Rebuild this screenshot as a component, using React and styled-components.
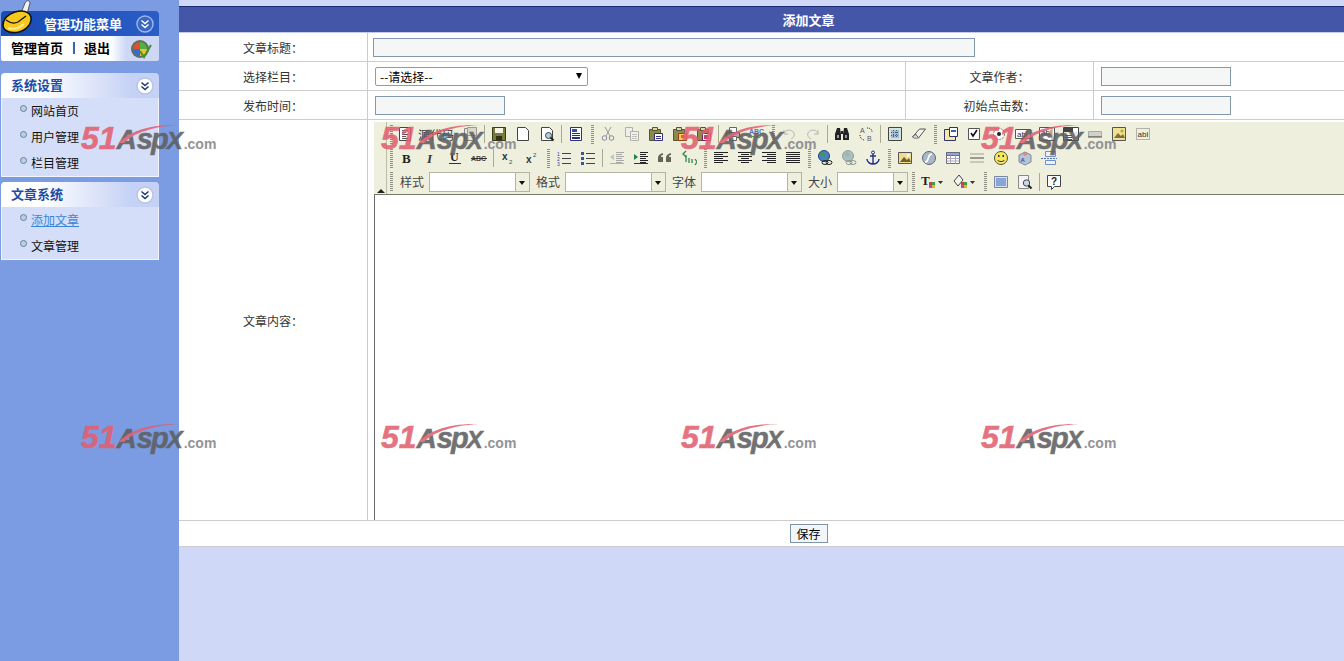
import React from 'react';
import styled, { createGlobalStyle } from 'styled-components';

const GlobalStyle = createGlobalStyle`
  html, body {
    margin: 0;
    padding: 0;
    height: 100%;
    overflow: hidden;
  }
  body {
    font-family: "Noto Sans CJK SC", "Liberation Sans", sans-serif;
    font-size: 12px;
    color: #000;
  }
`;

const Page = styled.div`
  position: relative;
  display: flex;
  width: 1344px;
  height: 661px;
  overflow: hidden;
  background: #cfd8f6;
`;

/* ---------- sidebar ---------- */

const Sidebar = styled.aside`
  position: relative;
  flex: 0 0 179px;
  box-sizing: border-box;
  padding: 11px 20px 0 1px;
  background: #7b9be3;
`;

const Logo = styled.svg`
  position: absolute;
  left: 1px;
  top: 0;
`;

const MenuTitle = styled.div`
  display: flex;
  align-items: center;
  justify-content: space-between;
  height: 25px;
  padding: 0 4px 0 43px;
  border-radius: 4px 4px 0 0;
  background: linear-gradient(to right, #174ab2, #2a5ec6);
  color: #fff;
  font-size: 13px;
  font-weight: 700;
  line-height: 25px;
`;

const HomeRow = styled.div`
  display: flex;
  align-items: center;
  box-sizing: border-box;
  height: 25px;
  padding: 0 0 2px 10px;
  background: linear-gradient(to right, #fff 0, #fff 110px, #cdd8f6 125px);
  font-size: 13px;
  font-weight: 700;
  border-radius: 0 0 2px 2px;
`;

const HomeDivider = styled.span`
  width: 2px;
  height: 12px;
  margin: 0 9px 0 10px;
  background: #3a66b0;
`;

const HomeIcon = styled.svg`
  margin: 3px 7px 0 auto;
`;

const Section = styled.section`
  margin-top: ${(p) => p.$gap}px;
`;

const SectionHead = styled.div`
  display: flex;
  align-items: center;
  justify-content: space-between;
  height: 25px;
  padding: 0 4px 0 10px;
  border-radius: 4px 4px 0 0;
  background: linear-gradient(to right, #fff 40px, #c6d2f5 130px);
  color: #1d4da6;
  font-size: 13px;
  font-weight: 700;
`;

const HeadText = styled.span`
  margin-top: -3px;
`;

const SectionBody = styled.div`
  border: 1px solid #f2f5fd;
  border-top: 0;
  background: #d5def8;
`;

const MenuItem = styled.div`
  display: flex;
  align-items: center;
  height: 26px;
  padding: 0 0 2px 18px;
  box-sizing: border-box;
  color: ${(p) => (p.$active ? '#3a86d8' : '#111')};
  text-decoration: ${(p) => (p.$active ? 'underline' : 'none')};
  &::before {
    content: '';
    width: 5px;
    height: 5px;
    margin: -3px 4px 0 0;
    border: 1px solid #6f7f94;
    border-radius: 50%;
    background: #b9cfe6;
  }
`;

/* ---------- main form ---------- */

const Main = styled.main`
  flex: 0 0 1259px;
  padding-top: 6px;
`;

const TitleBar = styled.div`
  height: 25px;
  border-top: 1px solid #1a2b78;
  border-bottom: 1px solid #c4cbe4;
  background: #4456a8;
  color: #fff;
  font-size: 13px;
  font-weight: 700;
  line-height: 26px;
  text-align: center;
`;

const FormRow = styled.div`
  display: grid;
  grid-template-columns: 189px 538px 188px 344px;
  height: ${(p) => p.$height || 28}px;
  border-bottom: 1px solid #cccccc;
  background: #fff;
`;

const LabelCell = styled.div`
  display: flex;
  align-items: center;
  justify-content: center;
  border-right: 1px solid #cccccc;
  color: #333;
`;

const FieldCell = styled.div`
  display: flex;
  align-items: center;
  min-width: 0;
  overflow: hidden;
  padding-left: ${(p) => p.$pad ?? 7}px;
  grid-column: span ${(p) => p.$span || 1};
  border-right: ${(p) => (p.$line ? '1px solid #cccccc' : '0')};
`;

const TextInput = styled.input`
  box-sizing: border-box;
  width: ${(p) => p.$width}px;
  height: 19px;
  padding: 0 3px;
  border: 1px solid #8399ab;
  background: #f5f7f7;
  outline: none;
  font: inherit;
`;

const SelectWrap = styled.div`
  position: relative;
  width: 213px;
  height: 19px;
  &::after {
    content: '';
    position: absolute;
    right: 6px;
    top: 6px;
    border-left: 3px solid transparent;
    border-right: 3px solid transparent;
    border-top: 6px solid #000;
  }
`;

const NativeSelect = styled.select`
  appearance: none;
  box-sizing: border-box;
  width: 100%;
  height: 100%;
  padding: 0 0 0 4px;
  border: 1px solid #999;
  border-radius: 2px;
  background: #fff;
  color: #000;
  font: inherit;
`;

const SaveRow = styled.div`
  display: flex;
  align-items: center;
  justify-content: center;
  height: 25px;
  border-bottom: 1px solid #cccccc;
  background: #fff;
`;

const SaveButton = styled.button`
  box-sizing: border-box;
  width: 38px;
  height: 19px;
  padding: 0;
  border: 1px solid #7f95ab;
  background: #f3f5f7;
  color: #000;
  font: inherit;
  line-height: 16px;
`;

/* ---------- editor ---------- */

const EditorCell = styled.div`
  grid-column: span 3;
  min-width: 0;
  padding: 2px 0 0 6px;
  overflow: hidden;
`;

const Toolbar = styled.div`
  display: flex;
  height: 72px;
  border-bottom: 1px solid #77776a;
  background: #efefde;
`;

const Collapser = styled.div`
  flex: 0 0 12px;
  position: relative;
  border-right: 1px solid #bdbda8;
  &::after {
    content: '';
    position: absolute;
    left: 3px;
    bottom: 1px;
    border-left: 4px solid transparent;
    border-right: 4px solid transparent;
    border-bottom: 4px solid #222;
  }
`;

const ToolRows = styled.div`
  flex: 1;
`;

const ToolRow = styled.div`
  display: flex;
  align-items: center;
  height: ${(p) => p.$height}px;
`;

const Gripper = styled.span`
  flex: 0 0 8px;
  height: 19px;
  background: repeating-linear-gradient(to bottom, #8f8f84 0 1px, transparent 1px 2px) center / 3px 100% no-repeat;
`;

const Separator = styled.span`
  flex: 0 0 5px;
  height: 18px;
  background: linear-gradient(#a9a996, #a9a996) center / 1px 100% no-repeat;
`;

const ToolButton = styled.span`
  flex: 0 0 ${(p) => p.$width || 24}px;
  display: flex;
  align-items: center;
  justify-content: center;
  height: 18px;
`;

const SourceButton = styled.span`
  flex: 0 0 63px;
  display: flex;
  align-items: center;
  gap: 5px;
  padding-left: 2px;
  box-sizing: border-box;
  color: #333;
`;

const ComboLabel = styled.span`
  flex: 0 0 auto;
  padding: 0 5px;
  color: #444;
`;

const Combo = styled.span`
  flex: 0 0 ${(p) => p.$width}px;
  display: flex;
  box-sizing: border-box;
  height: 20px;
  margin-right: 1px;
  border: 1px solid #b4b4a4;
  background: #fff;
`;

const ComboArrow = styled.span`
  position: relative;
  margin-left: auto;
  width: 13px;
  border-left: 1px solid #b4b4a4;
  background: #efefde;
  &::after {
    content: '';
    position: absolute;
    left: 3px;
    top: 8px;
    border-left: 3px solid transparent;
    border-right: 3px solid transparent;
    border-top: 4px solid #111;
  }
`;

const EditArea = styled.div`
  height: 325px;
  border-left: 1px solid #6b6b6b;
  background: #fff;
`;

/* ---------- watermark ---------- */

const WatermarkLayer = styled.div`
  position: absolute;
  left: 81px;
  top: 124px;
  display: grid;
  grid-template-columns: repeat(4, 300px);
  grid-auto-rows: 299px;
  pointer-events: none;
`;

const Mark = styled.div`
  position: relative;
  display: flex;
  align-items: baseline;
  height: 28px;
  line-height: 28px;
  font-family: "Liberation Sans", Arial, sans-serif;
  font-weight: 700;
  white-space: nowrap;
  opacity: 0.88;
`;

const MarkNum = styled.span`
  color: #e25f70;
  font-size: 32px;
  font-style: italic;
  -webkit-text-stroke: 0.6px #e25f70;
`;

const MarkBrand = styled.span`
  color: #5e5e60;
  font-size: ${(p) => p.$size}px;
  font-style: italic;
  letter-spacing: ${(p) => p.$track || 0}px;
  -webkit-text-stroke: 0.5px #5e5e60;
`;

const MarkTail = styled.span`
  margin-left: 1px;
  color: #85868a;
  font-size: 14px;
`;

const Swoosh = styled.svg`
  position: absolute;
  left: 38px;
  top: 0;
`;

const Watermark = () => (
  <Mark>
    <MarkNum>51</MarkNum>
    <MarkBrand $size={28}>A</MarkBrand>
    <MarkBrand $size={29} $track={-2}>sp</MarkBrand>
    <MarkBrand $size={24}>X</MarkBrand>
    <MarkTail>.com</MarkTail>
    <Swoosh width="62" height="20" viewBox="0 0 62 20">
      <path d="M0 19C8 9 28 0 60 1 36 2 14 9 5 19Z" fill="#e25f70" />
    </Swoosh>
  </Mark>
);

/* ---------- toolbar icons ---------- */

const sans = 'Liberation Sans, sans-serif';
const serif = 'Liberation Serif, serif';

const lines = (ys, x1, x2, color = '#333') =>
  ys.map((y, i) => {
    const pair = Array.isArray(x2) ? x2[i % x2.length] : x2;
    return <path key={y} d={`M${x1} ${y + 0.5}H${pair}`} stroke={color} />;
  });

const page = <path d="M2.5 1.5h8l3 3v10h-11z" fill="#fff" stroke="#444" />;
const clipboard = (
  <>
    <path d="M1.5 3.5h11v11h-11z" fill="#8a8a50" stroke="#555530" />
    <path d="M4.5 1.5h5v3h-5z" fill="#dcd8b0" stroke="#555530" />
  </>
);
const colorSquares = (
  <>
    <rect x="8" y="8" width="3" height="3" fill="#d04040" />
    <rect x="11" y="8" width="3" height="3" fill="#40a040" />
    <rect x="8" y="11" width="3" height="3" fill="#c040c0" />
    <rect x="11" y="11" width="3" height="3" fill="#e0b030" />
  </>
);
const grid = (
  <>
    <path d="M1.5 2.5h13v11h-13z" fill="#fff" stroke="#6a6a7a" />
    <path d="M1.5 2.5h13v3h-13z" fill="#8fa8d8" stroke="#6a6a7a" />
    <path d="M1.5 8.5h13M1.5 11h13M5.5 5.5v8M10.5 5.5v8" stroke="#a8a8b8" fill="none" />
  </>
);

const glyphs = {
  docProps: (
    <>
      <path d="M2.5 2.5h9v12h-9z" fill="#e8e8dc" stroke="#888" />
      <path d="M5.5 1.5h9v8h-9z" fill="#d8d8c8" stroke="#999" />
    </>
  ),
  sourceDoc: (
    <>
      <path d="M2.5 1.5h11v13h-11z" fill="#fff" stroke="#444" />
      {lines([4, 6, 8, 10, 12], 5, [11, 9], '#555')}
    </>
  ),
  save: (
    <>
      <path d="M1.5 1.5h13v13h-13z" fill="#767a3c" stroke="#3c3c1c" />
      <path d="M4 2h8v5H4z" fill="#f4f4e4" />
      <path d="M5 10h6v4H5z" fill="#2e3018" />
    </>
  ),
  newPage: page,
  preview: (
    <>
      {page}
      <circle cx="9.5" cy="9.5" r="3" fill="#a8d0e0" stroke="#444" />
      <path d="M11.5 11.5l3 3" stroke="#222" strokeWidth="2" />
    </>
  ),
  templates: (
    <>
      <path d="M2.5 1.5h11v13h-11z" fill="#fff" stroke="#30307a" />
      <path d="M4 3h5v3H4z" fill="#3050c0" />
      {lines([7, 9, 11, 12], 4, 12, '#30307a')}
    </>
  ),
  cut: (
    <>
      <path d="M5 1l5 9M11 1L6 10" stroke="#9a9a9a" fill="none" />
      <circle cx="4.5" cy="12" r="2.3" fill="none" stroke="#8888a0" />
      <circle cx="11.5" cy="12" r="2.3" fill="none" stroke="#8888a0" />
    </>
  ),
  copy: (
    <>
      <path d="M1.5 1.5h7v9h-7z" fill="#eee" stroke="#b0b0a8" />
      <path d="M6.5 5.5h8v9h-8z" fill="#f2f2ea" stroke="#b0b0a8" />
      {lines([8, 10, 12], 8, 13, '#c0c0b8')}
    </>
  ),
  paste: (
    <>
      {clipboard}
      <path d="M6.5 7.5h8v7h-8z" fill="#fff" stroke="#30307a" />
      {lines([10, 12], 8, 13, '#30307a')}
    </>
  ),
  pasteText: (
    <>
      {clipboard}
      <path d="M6.5 7.5h8v7h-8z" fill="#f8d060" stroke="#a04010" />
      <path d="M9 9h4v3H9z" fill="#e06020" />
    </>
  ),
  pasteWord: (
    <>
      {clipboard}
      <path d="M6.5 7.5h8v7h-8z" fill="#fff" stroke="#802060" />
      <path d="M8 9h5v4H8z" fill="#c04080" />
    </>
  ),
  print: (
    <>
      <path d="M4.5 1.5h7v5h-7z" fill="#fff" stroke="#666" />
      <path d="M1.5 6.5h13v5h-13z" fill="#aaa" stroke="#555" />
      <path d="M4.5 10.5h7v4h-7z" fill="#fff" stroke="#666" />
    </>
  ),
  spell: (
    <>
      <text x="0" y="8" fontFamily={sans} fontSize="7" fontWeight="700" fill="#5070c0">ABC</text>
      <path d="M2 12l2-2 2 2 2-2 2 2 2-2" stroke="#60a060" fill="none" />
    </>
  ),
  undo: <path d="M3 8c1-5 8-5 10-1 1 3-1 5-3 6M3 4v4h4" stroke="#b4b4b4" fill="none" />,
  redo: <path d="M13 8c-1-5-8-5-10-1-1 3 1 5 3 6M13 4v4H9" stroke="#b4b4b4" fill="none" />,
  find: (
    <>
      <path d="M1 8l2-6h3l1 6v6H1zM9 8l1-6h3l2 6v6H9z" fill="#222" />
      <path d="M7 5h2v3H7z" fill="#222" />
      <path d="M3 9h2v3H3zM11 9h2v3h-2z" fill="#99a" />
    </>
  ),
  replace: (
    <>
      <text x="2" y="7" fontFamily={sans} fontSize="7" fill="#555">A</text>
      <text x="9" y="15" fontFamily={sans} fontSize="7" fill="#555">B</text>
      <path d="M2 9c0 3 2 5 5 5M9 2c3 0 5 1 5 4" stroke="#333" strokeDasharray="1 1" fill="none" />
    </>
  ),
  selectAll: (
    <>
      <path d="M1.5 1.5h13v13h-13z" fill="#d4e4d8" stroke="#444" />
      <path d="M4 4h8v8H4z" fill="#a8bcd8" />
      <path d="M4 6.5h8M4 9.5h8M6.5 4v8M9.5 4v8" stroke="#406080" strokeDasharray="1 1" />
    </>
  ),
  removeFormat: (
    <>
      <path d="M1.5 11l7-8h6l-7 9H3z" fill="#f2f2ea" stroke="#555" />
      <path d="M1.5 11l3-3 3 4" stroke="#555" fill="#ddd" />
    </>
  ),
  form: (
    <>
      <path d="M1.5 3.5h11v11h-11z" fill="#f8e8a0" stroke="#30306a" />
      <path d="M6.5 1.5h8v9h-8z" fill="#fff" stroke="#30306a" />
      <path d="M8 4h5v2H8z" fill="#4060c0" />
    </>
  ),
  checkbox: (
    <>
      <path d="M1.5 2.5h11v11h-11z" fill="#fff" stroke="#555" />
      <path d="M4 7l2 3 4-6" stroke="#111" strokeWidth="1.6" fill="none" />
    </>
  ),
  radio: (
    <>
      <circle cx="8" cy="8" r="5.5" fill="#fff" stroke="#777" strokeDasharray="2 1" />
      <circle cx="8" cy="8" r="2" fill="#222" />
    </>
  ),
  textField: (
    <>
      <path d="M0.5 3.5h15v9H0.5z" fill="#fff" stroke="#555" />
      <text x="2" y="11" fontFamily={sans} fontSize="8" fill="#333">abl</text>
    </>
  ),
  textArea: (
    <>
      <path d="M0.5 1.5h15v13H0.5z" fill="#fff" stroke="#555" />
      <text x="2" y="9" fontFamily={sans} fontSize="8" fill="#333">abl</text>
      <path d="M13 2v12" stroke="#999" />
    </>
  ),
  selectBox: (
    <>
      <path d="M0.5 1.5h15v13H0.5z" fill="#e8e8e0" stroke="#444" />
      <path d="M1 2h9v4H1z" fill="#444" />
      <path d="M10.5 2h4.5v4h-4.5zM1 8h9v6H1z" fill="#fff" />
      {lines([9, 11, 13], 2, 9, '#555')}
    </>
  ),
  buttonField: (
    <>
      <path d="M1.5 5.5h13v5h-13z" fill="#d4d0c8" stroke="#aaa" />
      <path d="M1 11h14" stroke="#555" />
    </>
  ),
  imageButton: (
    <>
      <path d="M1.5 1.5h13v13h-13z" fill="#f0e090" stroke="#555" />
      <path d="M3 12l4-5 3 3 2-2 2 4z" fill="#807040" />
      <circle cx="11" cy="5" r="1.5" fill="#a0b040" />
    </>
  ),
  hiddenField: (
    <>
      <path d="M1.5 2.5h13v11h-13z" fill="none" stroke="#777" strokeDasharray="1 1" />
      <text x="2.5" y="11" fontFamily={sans} fontSize="8" fill="#333">abl</text>
    </>
  ),
  bold: <text x="3" y="13" fontFamily={serif} fontSize="13" fontWeight="700" fill="#222">B</text>,
  italic: <text x="4" y="13" fontFamily={serif} fontSize="13" fontWeight="700" fontStyle="italic" fill="#333">I</text>,
  underline: (
    <>
      <text x="3" y="11" fontFamily={serif} fontSize="12" fontWeight="700" fill="#222">U</text>
      <path d="M2 13.5h12" stroke="#333" />
    </>
  ),
  strike: (
    <>
      <text x="0" y="11" fontFamily={sans} fontSize="7" fontWeight="700" fill="#444">ABC</text>
      <path d="M0 8.5h16" stroke="#333" />
    </>
  ),
  subscript: (
    <>
      <text x="2" y="10" fontFamily={sans} fontSize="10" fontWeight="700" fill="#333">x</text>
      <text x="9" y="14" fontFamily={sans} fontSize="6" fill="#445">2</text>
    </>
  ),
  superscript: (
    <>
      <text x="2" y="13" fontFamily={sans} fontSize="10" fontWeight="700" fill="#333">x</text>
      <text x="9" y="7" fontFamily={sans} fontSize="6" fill="#445">2</text>
    </>
  ),
  ol: (
    <>
      <text x="1" y="6" fontFamily={sans} fontSize="5" fill="#3040a0">1</text>
      <text x="1" y="11" fontFamily={sans} fontSize="5" fill="#3040a0">2</text>
      <text x="1" y="16" fontFamily={sans} fontSize="5" fill="#3040a0">3</text>
      {lines([3, 8, 13], 6, 15, '#444')}
    </>
  ),
  ul: (
    <>
      <path d="M1 2h3v3H1zM1 7h3v3H1zM1 12h3v3H1z" fill="#4050a0" />
      {lines([3, 8, 13], 6, 15, '#444')}
    </>
  ),
  outdent: (
    <>
      {lines([2, 4, 6, 8, 10, 12], 7, [15, 13], '#a8a8a8')}
      <path d="M1 7l4-3v6z" fill="#b8c8c0" />
      <path d="M1 13.5h14" stroke="#b0b0b0" />
    </>
  ),
  indent: (
    <>
      {lines([2, 4, 6, 8, 10, 12], 7, [15, 13], '#222')}
      <path d="M5 7L1 4v6z" fill="#208050" />
      <path d="M1 13.5h14" stroke="#333" />
    </>
  ),
  quote: <path d="M1 8c0-3 2-4 5-5v2c-2 0-2 1-2 2h2v5H1zM9 8c0-3 2-4 5-5v2c-2 0-2 1-2 2h2v5H9z" fill="#646458" />,
  div: (
    <>
      <path d="M5 1L2 4l3 3" stroke="#2a8a4a" fill="none" strokeWidth="1.3" />
      <path d="M5 5v7M8 8v5M11 9v4M14 9l2 3-2 3" stroke="#2a8a4a" fill="none" strokeWidth="1.3" />
    </>
  ),
  left: lines([2, 4, 6, 8, 10, 12], 1, [15, 10], '#222'),
  center: lines([2, 6, 10], 1, 15, '#222').concat(lines([4, 8, 12], 4, 12, '#222')),
  right: lines([2, 6, 10], 1, 15, '#222').concat(lines([4, 8, 12], 6, 15, '#222')),
  justify: lines([2, 4, 6, 8, 10, 12], 1, 15, '#222'),
  link: (
    <>
      <circle cx="7" cy="6" r="5.5" fill="#4a80c8" stroke="#204080" />
      <path d="M3 4l3-2 3 2-2 3-3-1zM8 8l3-1 0 3z" fill="#3a9a50" />
      <ellipse cx="8" cy="12.5" rx="3" ry="2" fill="none" stroke="#222" />
      <ellipse cx="12" cy="12.5" rx="3" ry="2" fill="none" stroke="#222" />
    </>
  ),
  unlink: (
    <>
      <circle cx="7" cy="6" r="5.5" fill="#a8c0c0" stroke="#90a0a0" />
      <path d="M3 4l3-2 3 2-2 3-3-1z" fill="#98b8a8" />
      <ellipse cx="8" cy="12.5" rx="3" ry="2" fill="none" stroke="#909890" />
      <ellipse cx="12" cy="12.5" rx="3" ry="2" fill="none" stroke="#909890" />
    </>
  ),
  anchor: (
    <>
      <circle cx="8" cy="2.5" r="1.5" fill="none" stroke="#20308a" />
      <path d="M8 4v10M5 6h6M2 9c0 3 3 5 6 5s6-2 6-5" stroke="#20308a" strokeWidth="1.4" fill="none" />
    </>
  ),
  image: (
    <>
      <path d="M1.5 2.5h13v11h-13z" fill="#f0dc90" stroke="#555" />
      <path d="M3 12l4-5 3 3 2-2 2 4z" fill="#706030" />
      <circle cx="11" cy="5.5" r="1.5" fill="#fff" />
    </>
  ),
  flash: (
    <>
      <circle cx="8" cy="8" r="6.5" fill="#a8b8c8" stroke="#606878" />
      <path d="M11 4c-3 0-3 2-4 5-.5 2-1.5 3-3 3" stroke="#fff" strokeWidth="1.6" fill="none" />
    </>
  ),
  table: grid,
  rule: (
    <>
      <path d="M1 4h14M1 12h14" stroke="#c8c8b8" strokeWidth="2" />
      <path d="M1 8h14" stroke="#9a9a90" strokeWidth="2" />
    </>
  ),
  smiley: (
    <>
      <circle cx="8" cy="8" r="6.5" fill="#f8e860" stroke="#555530" />
      <path d="M5 5h1.5v2H5zM9.5 5H11v2H9.5z" fill="#333" />
      <path d="M4.5 10c1 2 6 2 7 0" stroke="#333" fill="none" />
    </>
  ),
  special: (
    <>
      <path d="M2 5l6-3 6 3v7l-6 3-6-3z" fill="#b8c4d8" stroke="#808898" />
      <path d="M5 4l3-1.5L11 4 8 6z" fill="#e08880" />
      <text x="3.5" y="12" fontFamily={sans} fontSize="6" fontWeight="700" fill="#3050a0">A</text>
    </>
  ),
  pageBreak: (
    <>
      <path d="M4.5 1.5h10v5h-10zM4.5 10.5h10v4h-10z" fill="#eef" stroke="#7090c0" />
      <path d="M0 8.5h16" stroke="#5070b0" strokeDasharray="2 1" />
    </>
  ),
  textColor: (
    <>
      <text x="0" y="11" fontFamily={serif} fontSize="13" fontWeight="700" fill="#222">T</text>
      {colorSquares}
    </>
  ),
  backColor: (
    <>
      <path d="M1 7l5-6 4 5-5 6z" fill="#f4f4ec" stroke="#444" />
      {colorSquares}
    </>
  ),
  maximize: (
    <>
      <path d="M1.5 2.5h13v11h-13z" fill="#d8e0f0" stroke="#7888a8" />
      <path d="M3 4h10v8H3z" fill="#88a4d8" />
    </>
  ),
  showBlocks: (
    <>
      <path d="M1.5 1.5h10v13h-10z" fill="#f4f4f4" stroke="#888" />
      <circle cx="9.5" cy="9" r="3.2" fill="#c8d8e8" stroke="#444" />
      <path d="M11.5 11.5l3 3" stroke="#222" strokeWidth="2" />
    </>
  ),
  about: (
    <>
      <path d="M1.5 1.5h13v11h-6l-3 3v-3h-4z" fill="#fff" stroke="#444" />
      <text x="5" y="11" fontFamily={sans} fontSize="10" fontWeight="700" fill="#223">?</text>
    </>
  ),
};

const Glyph = ({ name }) => (
  <svg width="16" height="16" viewBox="0 0 16 16">
    {glyphs[name]}
  </svg>
);

const Tool = ({ name, width }) => (
  <ToolButton $width={width}>
    <Glyph name={name} />
  </ToolButton>
);

const DropTool = ({ name }) => (
  <ToolButton $width={32}>
    <Glyph name={name} />
    <svg width="8" height="8" viewBox="0 0 8 8">
      <path d="M1 3h5L3.5 6z" fill="#333" />
    </svg>
  </ToolButton>
);

// | gripper, - separator, anything else an icon
const renderTools = (list) =>
  list.map((item, i) => {
    if (item === '|') return <Gripper key={i} />;
    if (item === '-') return <Separator key={i} />;
    return <Tool key={i} name={item} />;
  });

const rowOne = ['docProps', '-', 'save', 'newPage', 'preview', '-', 'templates', '|', 'cut', 'copy', 'paste', 'pasteText', 'pasteWord', '-', 'print', 'spell', '|', 'undo', 'redo', '-', 'find', 'replace', '-', 'selectAll', 'removeFormat', '|', 'form', 'checkbox', 'radio', 'textField', 'textArea', 'selectBox', 'buttonField', 'imageButton', 'hiddenField'];
const rowTwo = ['|', 'bold', 'italic', 'underline', 'strike', '-', 'subscript', 'superscript', '|', 'ol', 'ul', '-', 'outdent', 'indent', 'quote', 'div', '|', 'left', 'center', 'right', 'justify', '|', 'link', 'unlink', 'anchor', '|', 'image', 'flash', 'table', 'rule', 'smiley', 'special', 'pageBreak'];
const combos = [['样式', 101], ['格式', 101], ['字体', 101], ['大小', 71]];

/* ---------- sidebar pieces ---------- */

const Chevrons = ({ dark }) => (
  <svg width="20" height="20" viewBox="0 0 20 20">
    <circle cx="10" cy="10" r="8" fill={dark ? '#fff' : '#3a66c4'} stroke={dark ? '#b8c4e4' : '#9ab4ea'} strokeWidth="1.5" />
    <path d="M6.5 6.5L10 9.5l3.5-3M6.5 10.5L10 13.5l3.5-3" fill="none" stroke={dark ? '#1a3570' : '#fff'} strokeWidth="1.5" />
  </svg>
);

const menus = [
  { title: '系统设置', gap: 12, items: ['网站首页', '用户管理', '栏目管理'] },
  { title: '文章系统', gap: 5, items: ['添加文章', '文章管理'] },
];

const App = () => (
  <Page>
    <GlobalStyle />
    <Sidebar>
      <MenuTitle>
        管理功能菜单
        <Chevrons />
      </MenuTitle>
      <Logo width="32" height="35" viewBox="0 0 32 35">
        <path d="M20 13L24 3c1-3 5-3 5 0l-3 11z" fill="#f2f2f2" stroke="#556" />
        <path d="M2 25c0-6 5-11 12-13 7-2 14-1 16 5 1 6-4 13-12 15-8 2-16-1-16-7z" fill="#f8c81c" stroke="#111" strokeWidth="1.6" />
        <path d="M5 20c4 3 8 4 12 2l8-6" fill="none" stroke="#111" strokeWidth="1.2" />
        <path d="M7 28c5 2 12 0 16-4" fill="none" stroke="#fce890" strokeWidth="2" />
      </Logo>
      <HomeRow>
        管理首页
        <HomeDivider />
        退出
        <HomeIcon width="22" height="22" viewBox="0 0 22 22">
          <circle cx="10" cy="11" r="9" fill="#5f6f60" />
          <path d="M10 4a7 7 0 0 0-7 7h7z" fill="#e05030" />
          <path d="M10 4a7 7 0 0 1 7 7h-7z" fill="#50b040" />
          <path d="M3 11a7 7 0 0 0 7 7v-7z" fill="#3070d0" />
          <path d="M10 11h7a7 7 0 0 1-7 7z" fill="#f0c030" />
          <path d="M10 13l4 6 7-12" fill="none" stroke="#48902c" strokeWidth="2" />
        </HomeIcon>
      </HomeRow>
      {menus.map((menu) => (
        <Section key={menu.title} $gap={menu.gap}>
          <SectionHead>
            <HeadText>{menu.title}</HeadText>
            <Chevrons dark />
          </SectionHead>
          <SectionBody>
            {menu.items.map((item) => (
              <MenuItem key={item} $active={item === '添加文章'}>
                {item}
              </MenuItem>
            ))}
          </SectionBody>
        </Section>
      ))}
    </Sidebar>

    <Main>
      <TitleBar>添加文章</TitleBar>
      <FormRow>
        <LabelCell>文章标题：</LabelCell>
        <FieldCell $span={3} $pad={5}>
          <TextInput $width={602} />
        </FieldCell>
      </FormRow>
      <FormRow>
        <LabelCell>选择栏目：</LabelCell>
        <FieldCell $line>
          <SelectWrap>
            <NativeSelect defaultValue="">
              <option value="">--请选择--</option>
            </NativeSelect>
          </SelectWrap>
        </FieldCell>
        <LabelCell>文章作者：</LabelCell>
        <FieldCell>
          <TextInput $width={130} />
        </FieldCell>
      </FormRow>
      <FormRow>
        <LabelCell>发布时间：</LabelCell>
        <FieldCell $line>
          <TextInput $width={130} />
        </FieldCell>
        <LabelCell>初始点击数：</LabelCell>
        <FieldCell>
          <TextInput $width={130} />
        </FieldCell>
      </FormRow>
      <FormRow $height={400}>
        <LabelCell>文章内容：</LabelCell>
        <EditorCell>
          <Toolbar>
            <Collapser />
            <ToolRows>
              <ToolRow $height={24}>
                <Gripper />
                <SourceButton>
                  <Glyph name="sourceDoc" />
                  源代码
                </SourceButton>
                {renderTools(rowOne)}
              </ToolRow>
              <ToolRow $height={24}>{renderTools(rowTwo)}</ToolRow>
              <ToolRow $height={23}>
                <Gripper />
                {combos.map(([label, width]) => (
                  <React.Fragment key={label}>
                    <ComboLabel>{label}</ComboLabel>
                    <Combo $width={width}>
                      <ComboArrow />
                    </Combo>
                  </React.Fragment>
                ))}
                <Gripper />
                <DropTool name="textColor" />
                <DropTool name="backColor" />
                {renderTools(['|', 'maximize', 'showBlocks', '-', 'about'])}
              </ToolRow>
            </ToolRows>
          </Toolbar>
          <EditArea />
        </EditorCell>
      </FormRow>
      <SaveRow>
        <SaveButton>保存</SaveButton>
      </SaveRow>
    </Main>

    <WatermarkLayer>
      {Array.from({ length: 8 }, (_, i) => (
        <Watermark key={i} />
      ))}
    </WatermarkLayer>
  </Page>
);

export default App;
